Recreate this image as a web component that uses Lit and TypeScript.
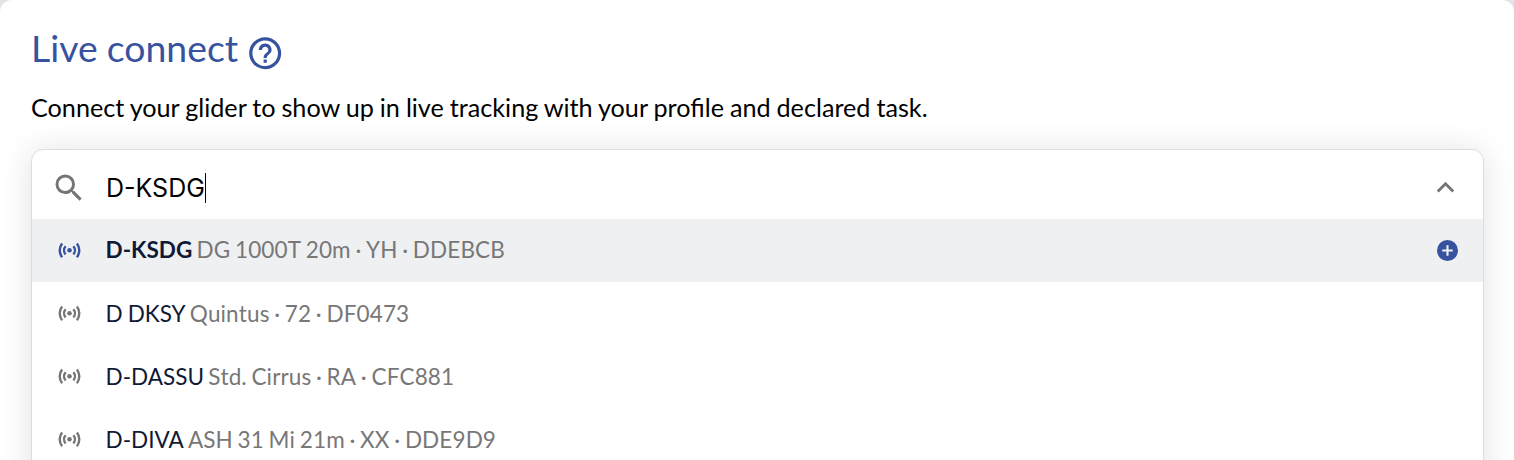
import { LitElement, html, css } from "lit";
import { customElement, property } from "lit/decorators.js";

interface Glider { reg: string; info: string; }

const gliders: Glider[] = [
  { reg: "D-KSDG", info: "DG 1000T 20m · YH · DDEBCB" },
  { reg: "D DKSY", info: "Quintus · 72 · DF0473" },
  { reg: "D-DASSU", info: "Std. Cirrus · RA · CFC881" },
  { reg: "D-DIVA", info: "ASH 31 Mi 21m · XX · DDE9D9" },
];

@customElement("glider-option")
class GliderOption extends LitElement {
  @property({ attribute: false }) glider!: Glider;
  @property({ type: Boolean, reflect: true }) active = false;

  static styles = css`
    :host { display: flex; align-items: center; box-sizing: border-box; height: 63px; padding: 0 25px 0 25px; font-size: 22.5px; color: #777; background: #fff; }
    :host([active]) { background: #eff0f2; }
    .signal { flex: none; width: 25px; height: 25px; margin-right: 23.6px; color: #757575; }
    :host([active]) .signal, .add { color: #3753a0; }
    .label { flex: 1; display: flex; gap: 4.2px; white-space: pre; line-height: 30px; padding-top: 1px; }
    :host([active]) .label { padding: 0 0 1px; }
    .reg { color: #101935; word-spacing: -0.8px; }
    :host([active]) .reg { font-weight: 700; }
    .info { font-kerning: none; letter-spacing: 0.12px; word-spacing: -1.2px; }
    .add { flex: none; width: 21px; height: 21px; }
  `;

  render() {
    return html`
      <svg class="signal" viewBox="0 0 24 24" fill="none" stroke="currentColor" stroke-width="2.3">
        <circle cx="12" cy="11.8" r="2.2" fill="currentColor" stroke="none"></circle>
        <path d="M8.3 7.9a5.8 5.8 0 0 0 0 7.8M15.7 7.9a5.8 5.8 0 0 1 0 7.8M4.9 5.2a10.6 10.6 0 0 0 0 13.2M19.1 5.2a10.6 10.6 0 0 1 0 13.2"></path>
      </svg>
      <div class="label"><span class="reg">${this.glider.reg}</span><span class="info">${this.glider.info}</span></div>
      ${this.active ? html`<svg class="add" viewBox="2 2 20 20" fill="currentColor">
        <path d="M12 2a10 10 0 1 0 0 20 10 10 0 0 0 0-20zm5 11h-4v4h-2v-4H7v-2h4V7h2v4h4v2z"></path></svg>` : null}
    `;
  }
}

@customElement("app-root")
class AppRoot extends LitElement {
  static styles = css`
    :host { display: block; height: 460px; overflow: hidden; background: #e4e4e6; font-family: Lato, sans-serif; color: #000; }
    .card { box-sizing: border-box; height: 460px; overflow: hidden; background: #fff; border-radius: 12px 12px 0 0; padding: 26px 30px 0 31px; }
    .heading { display: flex; align-items: center; height: 44px; }
    h1 { margin: 0; font-size: 37.4px; line-height: 44px; font-weight: 400; color: #3753a0; word-spacing: -0.5px; }
    .help { width: 38.4px; height: 38.4px; margin: 10px 0 0 7.7px; color: #3753a0; }
    p { margin: 21px 0 0; font-size: 25.2px; line-height: 32px; white-space: nowrap; word-spacing: -0.5px; }
    .box { margin-top: 26px; border: 1px solid #dcdddf; border-radius: 12px; height: 400px; overflow: hidden; background: #fff; box-shadow: 0 2px 32px rgba(0,0,0,.12); }
    .search { display: flex; align-items: center; height: 69px; padding: 6px 20px 0 19px; box-sizing: border-box; }
    .search svg { flex: none; color: #757575; }
    .query { flex: 1; display: flex; align-items: center; margin-left: 19px; font: 25px Inter, sans-serif; }
    .caret { width: 1px; height: 30px; background: #000; }
  `;

  render() {
    return html`
      <div class="card">
        <div class="heading">
          <h1>Live connect</h1>
          <svg class="help" viewBox="0 0 24 24" fill="currentColor"><path d="M11 18h2v-2h-2v2zm1-16C6.48 2 2 6.48 2 12s4.48 10 10 10 10-4.48 10-10S17.52 2 12 2zm0 18c-4.41 0-8-3.59-8-8s3.59-8 8-8 8 3.59 8 8-3.59 8-8 8zm0-14c-2.21 0-4 1.79-4 4h2c0-1.1.9-2 2-2s2 .9 2 2c0 2-3 1.75-3 5h2c0-2.25 3-2.5 3-5 0-2.21-1.79-4-4-4z"></path></svg>
        </div>
        <p>Connect your glider to show up in live tracking with your profile and declared task.</p>
        <div class="box">
          <div class="search">
            <svg width="36" height="36" viewBox="0 0 24 24" fill="currentColor"><path d="M15.5 14h-.79l-.28-.27A6.47 6.47 0 0 0 16 9.5 6.5 6.5 0 1 0 9.5 16c1.61 0 3.09-.59 4.23-1.57l.27.28v.79l5 4.99L20.49 19l-4.99-5zm-6 0C7.01 14 5 11.99 5 9.5S7.01 5 9.5 5 14 7.01 14 9.5 11.99 14 9.5 14z"></path></svg>
            <div class="query">D-KSDG<span class="caret"></span></div>
            <svg width="35" height="35" viewBox="0 0 24 24" fill="currentColor"><path d="M12 8l-6 6 1.41 1.41L12 10.83l4.59 4.58L18 14z"></path></svg>
          </div>
          ${gliders.map((g, i) => html`<glider-option .glider=${g} ?active=${i === 0}></glider-option>`)}
        </div>
      </div>
    `;
  }
}
